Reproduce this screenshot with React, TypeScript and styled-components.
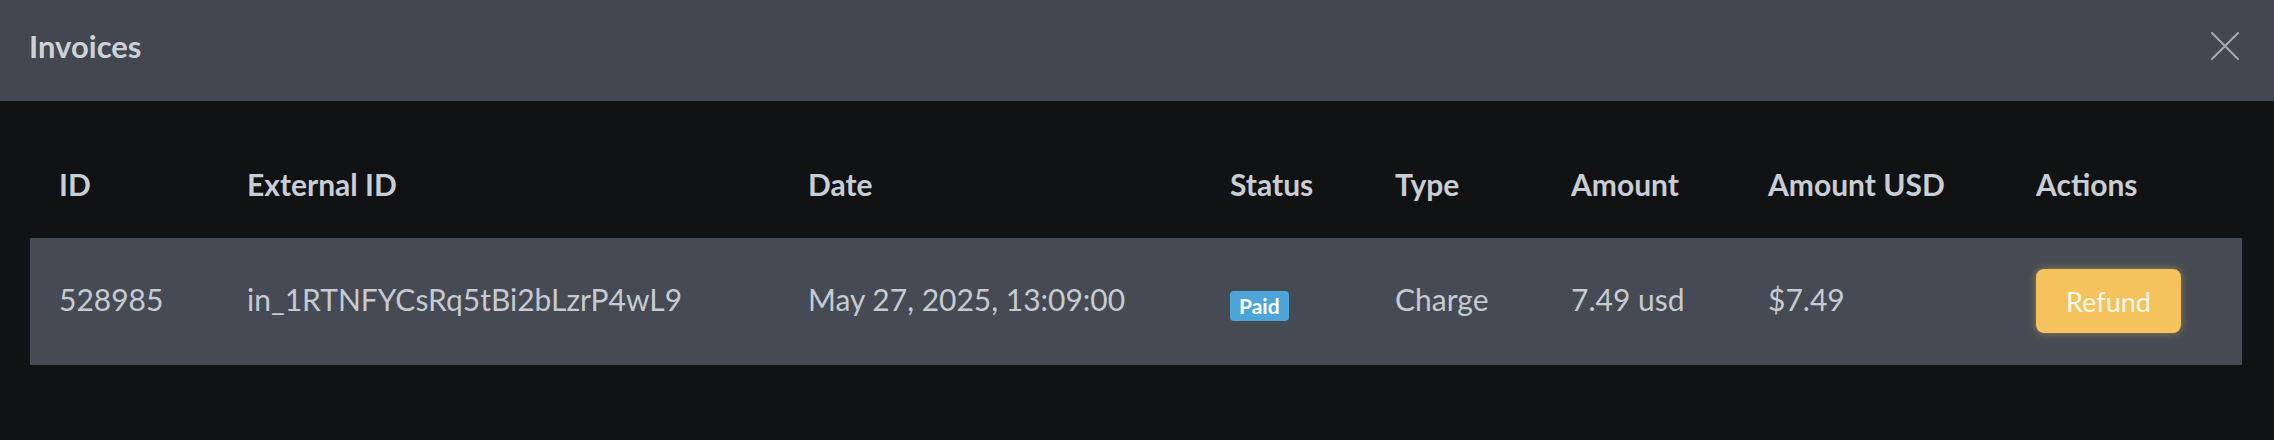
import styled, { createGlobalStyle } from "styled-components";

const GlobalStyle = createGlobalStyle`
  html, body {
    margin: 0;
    padding: 0;
    background: #111214;
  }
  body {
    font-family: Lato, "Open Sans", sans-serif;
  }
`;

const Modal = styled.div`
  width: 2274px;
  height: 440px;
  background: #111214;
  overflow: hidden;
  display: flex;
  flex-direction: column;
`;

const ModalHeader = styled.header`
  height: 101px;
  flex-shrink: 0;
  background: #434751;
  display: flex;
  align-items: center;
  justify-content: space-between;
  padding: 0 35px 10px 29px;
  box-sizing: border-box;
`;

const ModalTitle = styled.h2`
  margin: 0;
  font-size: 31px;
  font-weight: 700;
  color: #cdd1d8;
`;

const CloseButton = styled.button`
  width: 28px;
  height: 28px;
  padding: 0;
  border: none;
  background: none;
  cursor: pointer;
  display: flex;
  align-items: center;
  justify-content: center;
`;

const ModalBody = styled.div`
  padding: 30px 32px 0 30px;
`;

const Table = styled.table`
  width: 100%;
  border-collapse: collapse;
  table-layout: fixed;
`;

const HeadCell = styled.th<{ $w: number }>`
  box-sizing: border-box;
  width: ${(p) => p.$w}px;
  height: 107px;
  padding: 0 0 2px 29px;
  text-align: left;
  font-size: 30px;
  font-weight: 700;
  color: #c9cdd4;
  vertical-align: middle;
  white-space: nowrap;
`;

const BodyRow = styled.tr`
  background: #454a54;
`;

const Cell = styled.td`
  box-sizing: border-box;
  height: 127px;
  padding: 0 0 5px 29px;
  font-size: 30px;
  color: #c6cad1;
  vertical-align: middle;
  white-space: nowrap;
`;

const Badge = styled.span`
  display: inline-flex;
  align-items: center;
  height: 30px;
  padding: 0 9px;
  border-radius: 4px;
  background: #4da5d8;
  color: #ffffff;
  font-size: 21px;
  font-weight: 700;
  vertical-align: middle;
  transform: translateY(3px);
`;

const RefundButton = styled.button`
  width: 145px;
  height: 64px;
  border: none;
  border-radius: 8px;
  background: #f5c25e;
  color: #fff9ec;
  font-family: inherit;
  font-size: 27px;
  box-shadow: 0 0 8px rgba(245, 194, 94, 0.45);
  cursor: pointer;
  transform: translateY(2px);
`;

const columns = [
  { label: "ID", w: 188 },
  { label: "External ID", w: 561 },
  { label: "Date", w: 422 },
  { label: "Status", w: 165 },
  { label: "Type", w: 176 },
  { label: "Amount", w: 197 },
  { label: "Amount USD", w: 268 },
  { label: "Actions", w: 235 },
];

const invoices = [
  {
    id: "528985",
    externalId: "in_1RTNFYCsRq5tBi2bLzrP4wL9",
    date: "May 27, 2025, 13:09:00",
    status: "Paid",
    type: "Charge",
    amount: "7.49 usd",
    amountUsd: "$7.49",
  },
];

export default function App() {
  return (
    <Modal>
      <GlobalStyle />
      <ModalHeader>
        <ModalTitle>Invoices</ModalTitle>
        <CloseButton aria-label="Close">
          <svg width="28" height="28" viewBox="0 0 28 28">
            <path
              d="M1 1 L27 27 M27 1 L1 27"
              stroke="#a7abb2"
              strokeWidth="2"
              strokeLinecap="round"
            />
          </svg>
        </CloseButton>
      </ModalHeader>
      <ModalBody>
        <Table>
          <thead>
            <tr>
              {columns.map((c) => (
                <HeadCell key={c.label} $w={c.w}>
                  {c.label}
                </HeadCell>
              ))}
            </tr>
          </thead>
          <tbody>
            {invoices.map((inv) => (
              <BodyRow key={inv.id}>
                <Cell>{inv.id}</Cell>
                <Cell>{inv.externalId}</Cell>
                <Cell>{inv.date}</Cell>
                <Cell>
                  <Badge>{inv.status}</Badge>
                </Cell>
                <Cell>{inv.type}</Cell>
                <Cell>{inv.amount}</Cell>
                <Cell>{inv.amountUsd}</Cell>
                <Cell>
                  <RefundButton>Refund</RefundButton>
                </Cell>
              </BodyRow>
            ))}
          </tbody>
        </Table>
      </ModalBody>
    </Modal>
  );
}
